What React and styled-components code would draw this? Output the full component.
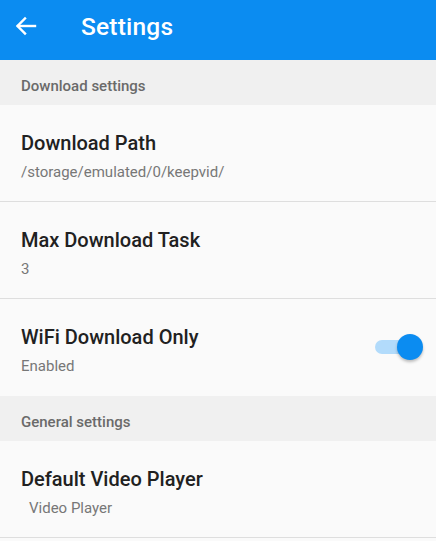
import React, { useState } from "react";
import styled, { createGlobalStyle } from "styled-components";

const Global = createGlobalStyle`
  html, body {
    margin: 0;
    padding: 0;
    background: #fafafa;
    font-family: Roboto, "Noto Sans", sans-serif;
  }
`;

const Screen = styled.div`
  width: 436px;
  height: 541px;
  overflow: hidden;
  background: #fafafa;
`;

const AppBar = styled.header`
  height: 60px;
  background: #0b8cf1;
  display: flex;
  align-items: center;
  padding: 0 0 0 13px;
  gap: 42px;
  color: #fff;
`;

const BackButton = styled.button`
  border: 0;
  background: none;
  padding: 0;
  width: 26px;
  height: 26px;
  display: flex;
  align-items: center;
  justify-content: center;
  color: #fff;
  margin-top: -8px;
`;

const Title = styled.h1`
  margin: 0 0 8px;
  font-size: 24.5px;
  font-weight: 500;
  letter-spacing: 0.2px;
`;

const SectionHeader = styled.div`
  height: 45px;
  box-sizing: border-box;
  background: #f0f0f0;
  display: flex;
  align-items: center;
  padding: 6px 21px 0;
  font-size: 15px;
  font-weight: 500;
  color: #6a6a6a;
`;

const Row = styled.div`
  height: 97px;
  box-sizing: border-box;
  display: flex;
  align-items: center;
  justify-content: space-between;
  padding: 0 13px 0 21px;
  border-bottom: ${(p) => (p.divider ? "1px solid #dedede" : "none")};
`;

const RowText = styled.div`
  display: flex;
  flex-direction: column;
  gap: 8px;
  margin-top: 5px;
`;

const RowTitle = styled.div`
  font-size: 20px;
  font-weight: 500;
  color: #212121;
`;

const RowValue = styled.div`
  font-size: 15px;
  color: #777;
  padding-left: ${(p) => p.indent || 0}px;
`;

const Track = styled.div`
  position: relative;
  width: 36px;
  height: 14px;
  border-radius: 7px;
  background: ${(p) => (p.on ? "#b2dbfb" : "#bdbdbd")};
  margin-right: 12px;
  margin-top: -2px;
  cursor: pointer;
`;

const Thumb = styled.div`
  position: absolute;
  top: -6px;
  left: ${(p) => (p.on ? "22px" : "-4px")};
  width: 26px;
  height: 26px;
  border-radius: 50%;
  background: ${(p) => (p.on ? "#0b8cf1" : "#f1f1f1")};
  box-shadow: 0 2px 3px rgba(0, 0, 0, 0.25);
`;

const Toggle = ({ on, onClick }) => (
  <Track on={on} onClick={onClick}>
    <Thumb on={on} />
  </Track>
);

export default function App() {
  const [wifiOnly, setWifiOnly] = useState(true);

  return (
    <Screen>
      <Global />
      <AppBar>
        <BackButton aria-label="Back">
          <svg width="24" height="24" viewBox="0 0 24 24" fill="none" stroke="#fff" strokeWidth="2.4" strokeLinecap="square">
            <path d="M21 12H4" />
            <path d="M11 4.5L3.5 12l7.5 7.5" />
          </svg>
        </BackButton>
        <Title>Settings</Title>
      </AppBar>

      <SectionHeader>Download settings</SectionHeader>
      <Row divider>
        <RowText>
          <RowTitle>Download Path</RowTitle>
          <RowValue>/storage/emulated/0/keepvid/</RowValue>
        </RowText>
      </Row>
      <Row divider>
        <RowText>
          <RowTitle>Max Download Task</RowTitle>
          <RowValue>3</RowValue>
        </RowText>
      </Row>
      <Row>
        <RowText>
          <RowTitle>WiFi Download Only</RowTitle>
          <RowValue>{wifiOnly ? "Enabled" : "Disabled"}</RowValue>
        </RowText>
        <Toggle on={wifiOnly} onClick={() => setWifiOnly(!wifiOnly)} />
      </Row>

      <SectionHeader>General settings</SectionHeader>
      <Row divider>
        <RowText>
          <RowTitle>Default Video Player</RowTitle>
          <RowValue indent={8}>Video Player</RowValue>
        </RowText>
      </Row>
    </Screen>
  );
}
